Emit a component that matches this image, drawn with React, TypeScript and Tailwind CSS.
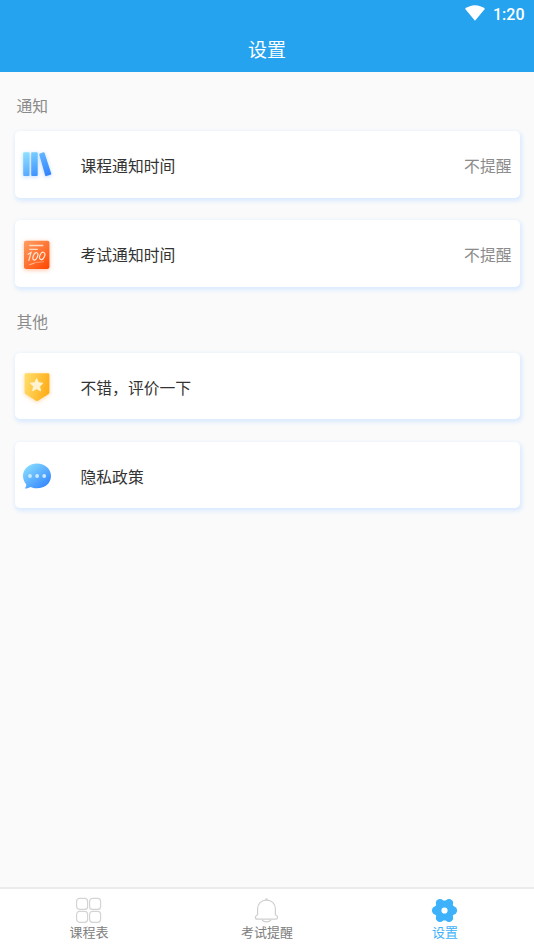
import type { ReactNode } from "react";

function Icon({ children }: { children: ReactNode }) {
  return (
    <svg className="h-[67px] w-[66px] shrink-0" viewBox="15 0 66 67" fill="none">
      {children}
    </svg>
  );
}

function BooksIcon() {
  return (
    <Icon>
      <defs>
        <linearGradient id="b1" x1="23" y1="21" x2="30" y2="45" gradientUnits="userSpaceOnUse">
          <stop stopColor="#8fe3ff" /><stop offset="1" stopColor="#57a8ff" />
        </linearGradient>
        <linearGradient id="b2" x1="31" y1="21" x2="38" y2="45" gradientUnits="userSpaceOnUse">
          <stop stopColor="#78cfff" /><stop offset="1" stopColor="#3d92ff" />
        </linearGradient>
        <linearGradient id="b3" x1="39" y1="21" x2="50" y2="45" gradientUnits="userSpaceOnUse">
          <stop stopColor="#66baff" /><stop offset="1" stopColor="#2f80ff" />
        </linearGradient>
      </defs>
      <g className="drop-shadow-[0_1px_2px_rgba(70,150,255,0.35)]">
        <rect x="23.2" y="21.2" width="6.3" height="23.9" rx="1" fill="url(#b1)" />
        <rect x="31.2" y="21.2" width="6.5" height="23.9" rx="1" fill="url(#b2)" />
        <path d="M40 22.4 43.4 21.2Q44.3 21 44.6 21.9L51.2 42.5Q51.4 43.5 50.6 43.8L46.3 45.1Q45.5 45.3 45.2 44.5L39.2 23.6Q39 22.7 40 22.4Z" fill="url(#b3)" />
      </g>
    </Icon>
  );
}

function ExamIcon() {
  return (
    <Icon>
      <defs>
        <linearGradient id="exam" x1="24" y1="21" x2="49" y2="49" gradientUnits="userSpaceOnUse">
          <stop stopColor="#ff9f63" /><stop offset="0.5" stopColor="#ff7433" /><stop offset="1" stopColor="#ff4600" />
        </linearGradient>
      </defs>
      <rect x="24" y="20.7" width="25.4" height="28.2" rx="1.8" fill="url(#exam)" className="drop-shadow-[0_1px_2px_rgba(255,90,20,0.4)]" />
      <path d="M29.3 25.5H43.3M29.3 29.4H37.8" stroke="#ffdac2" strokeWidth="1.4" />
      <g stroke="#ffe5d4" strokeWidth="1.2" strokeLinecap="round">
        <path d="M28.1 34.3 31 32.6 28.9 40.4" />
        <ellipse cx="35.4" cy="36.3" rx="2.1" ry="3.9" transform="rotate(22 35.4 36.3)" />
        <ellipse cx="42.2" cy="35.9" rx="2.3" ry="3.8" transform="rotate(25 42.2 35.9)" />
        <path d="M29.5 44.6Q35 41.8 43.5 41.7" strokeWidth="0.7" opacity="0.65" />
        <path d="M30 44.5 34 43.5" strokeWidth="0.7" opacity="0.6" />
      </g>
    </Icon>
  );
}

function RateIcon() {
  return (
    <Icon>
      <defs>
        <linearGradient id="rate" x1="25" y1="28" x2="50" y2="34" gradientUnits="userSpaceOnUse">
          <stop stopColor="#ffdc68" /><stop offset="1" stopColor="#ffac17" />
        </linearGradient>
      </defs>
      <g transform="translate(0 .4)">
        <path d="M26 20.8H48Q49.4 20.8 49.4 22.2V40.2Q49.4 41.1 48.6 41.6L38 48.4Q37 49 36 48.4L25.4 41.6Q24.6 41.1 24.6 40.2V22.2Q24.6 20.8 26 20.8Z" fill="url(#rate)" className="drop-shadow-[0_1px_2px_rgba(255,160,30,0.4)]" />
        <path d="M36.6 26.1 38.5 30.2 43 30.8 39.7 33.9 40.6 38.5 36.6 36.3 32.6 38.5 33.5 33.9 30.2 30.8 34.7 30.2Z" fill="#fff3d0" stroke="#fff3d0" strokeWidth="0.8" strokeLinejoin="round" />
      </g>
    </Icon>
  );
}

function ChatIcon() {
  return (
    <Icon>
      <defs>
        <linearGradient id="chat" x1="27" y1="23" x2="46" y2="46" gradientUnits="userSpaceOnUse">
          <stop stopColor="#86dcff" /><stop offset="1" stopColor="#3486ff" />
        </linearGradient>
      </defs>
      <g transform="translate(0 .8)">
        <path d="M37 21.6C45.3 21.6 51 27.3 51 34.2S45.3 46.5 37 46.5C34.5 46.5 32.3 46 30.5 45.2 28.5 46.4 26.6 46.9 24.8 46.4 26 45.2 26.4 43.8 26.2 42.4 24.2 40.2 23 37.5 23 34.2 23 27.3 28.7 21.6 37 21.6Z" fill="url(#chat)" />
        <g fill="#c9eaff">
          <circle cx="30" cy="34.2" r="1.9" />
          <circle cx="37.1" cy="34.2" r="1.9" />
          <circle cx="44.2" cy="34.2" r="1.9" />
        </g>
      </g>
    </Icon>
  );
}

function Card({ icon, title, value }: { icon: ReactNode; title: string; value?: string }) {
  return (
    <div className="flex h-[66.5px] items-center rounded-[5px] bg-white pr-2 shadow-[1px_2px_4px_0.5px_#d9eaff]">
      {icon}
      <span className="flex-1 pt-[3.5px] text-[15.8px] leading-6 text-[#333]">{title}</span>
      {value && <span className="pt-[3.5px] text-[15.8px] leading-6 text-[#8b8b8b]">{value}</span>}
    </div>
  );
}

function Tab({ label, active, children }: { label: string; active?: boolean; children: ReactNode }) {
  return (
    <div className={`flex flex-1 flex-col items-center pt-[7px] text-[13px] leading-4 ${active ? "text-[#3db2fb]" : "text-[#808080]"}`}>
      <svg className="h-7 w-7" viewBox="0 0 28 28" fill="none">{children}</svg>
      <span>{label}</span>
    </div>
  );
}

export default function App() {
  return (
    <div className="flex h-[949px] w-[534px] flex-col bg-[#fafafa] font-['Noto_Sans_CJK_SC',sans-serif]">
      <header className="h-[72px] bg-[#25a3ee] text-white">
        <div className="flex h-7 items-center justify-end pr-[9.5px]">
          <svg className="mr-[8.5px] mb-[2px] h-4 w-5" viewBox="0 0 20 16" fill="#fff">
            <path d="M0 3.8C6-1 14-1 20 3.8L10 15.8Z" />
          </svg>
          <span className="pt-[2px] font-[Roboto] text-base font-medium leading-7">1:20</span>
        </div>
        <h1 className="text-center text-[19px] leading-[41px]">设置</h1>
      </header>

      <main className="flex-1 px-[14.5px]">
        <h2 className="h-[59px] pl-[2px] pt-[22px] text-[15.8px] leading-6 text-[#8b8b8b]">通知</h2>
        <div className="flex flex-col gap-[22.5px]">
          <Card icon={<BooksIcon />} title="课程通知时间" value="不提醒" />
          <Card icon={<ExamIcon />} title="考试通知时间" value="不提醒" />
        </div>
        <h2 className="h-[66px] pl-[2px] pt-[23px] text-[15.8px] leading-6 text-[#8b8b8b]">其他</h2>
        <div className="flex flex-col gap-[22.5px]">
          <Card icon={<RateIcon />} title="不错，评价一下" />
          <Card icon={<ChatIcon />} title="隐私政策" />
        </div>
      </main>

      <nav className="flex h-[62px] border-t-2 border-[#ebebeb] bg-white">
        <Tab label="课程表">
          <g stroke="#d4d4d4" strokeWidth="1.2">
            <rect x="1.6" y="2.4" width="11" height="11" rx="3" />
            <rect x="14.6" y="2.4" width="11" height="11" rx="3" />
            <rect x="1.6" y="15.3" width="11" height="11" rx="3" />
            <rect x="14.6" y="15.3" width="11" height="11" rx="3" />
          </g>
        </Tab>
        <Tab label="考试提醒">
          <g stroke="#cfcfcf" strokeWidth="1.2" strokeLinejoin="round">
            <path d="M13.5 4.1C8.1 4.1 4.6 8 4.6 13V18.2Q4.6 18.9 3.9 19.3 2.4 20.2 2.4 21.5 2.4 23.2 4.4 23.2H22.6Q24.6 23.2 24.6 21.5 24.6 20.2 23.1 19.3 22.4 18.9 22.4 18.2V13C22.4 8 18.9 4.1 13.5 4.1Z" />
            <path d="M12.3 3.7Q13.5 2 14.7 3.7M9 23.8Q10 25.8 13.5 25.8T18 23.8" />
          </g>
        </Tab>
        <Tab label="设置" active>
          <g fill="#3db2fb">
            <circle cx="13.5" cy="14.5" r="10.1" />
            <circle cx="5.1" cy="14.5" r="4.2" />
            <circle cx="21.9" cy="14.5" r="4.2" />
            <circle cx="9" cy="7.1" r="4.2" />
            <circle cx="18" cy="7.1" r="4.2" />
            <circle cx="9" cy="21.9" r="4.2" />
            <circle cx="18" cy="21.9" r="4.2" />
          </g>
          <circle cx="13.5" cy="14.5" r="3.1" fill="#fff" />
        </Tab>
      </nav>
    </div>
  );
}
